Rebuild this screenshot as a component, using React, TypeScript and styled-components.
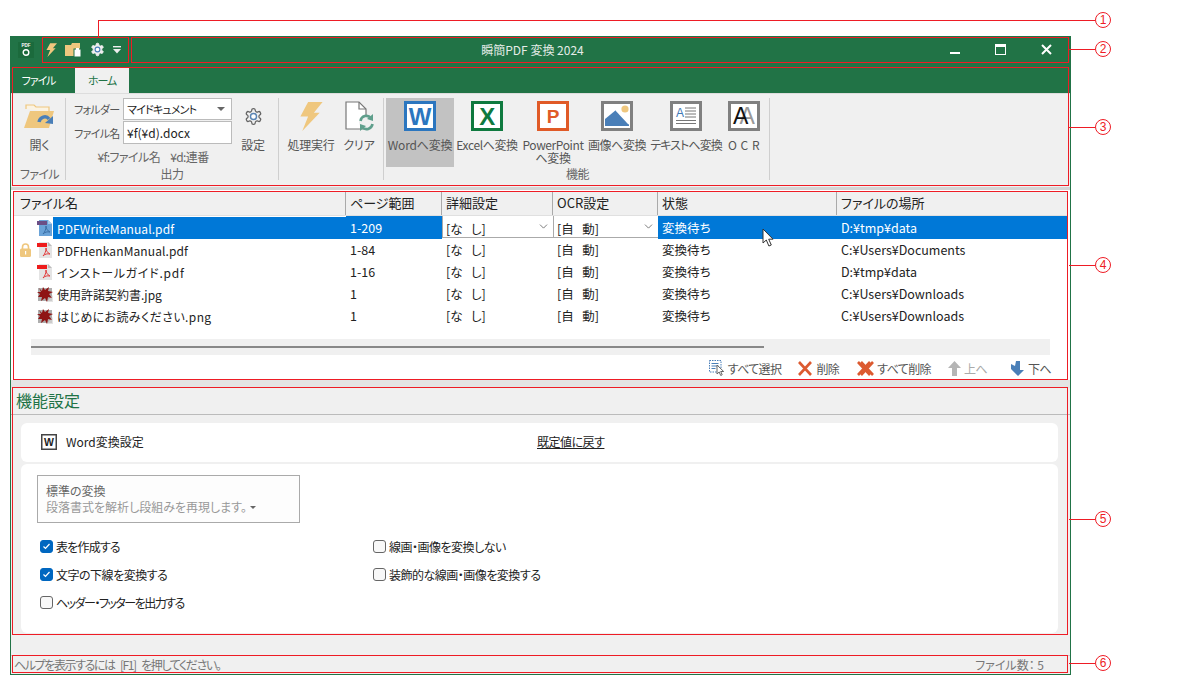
import React from 'react';
import styled, { createGlobalStyle } from 'styled-components';
import { ChevronDown } from 'lucide-react';

const GlobalStyle = createGlobalStyle`
  html, body { margin: 0; padding: 0; background: #fff; }
  body {
    font-family: "Noto Sans CJK JP", "Noto Sans", sans-serif;
    font-size: 12px;
    font-feature-settings: "palt";
    color: #222;
  }
`;

const GEAR =
  'M12.22 2h-.44a2 2 0 0 0-2 2v.18a2 2 0 0 1-1 1.73l-.43.25a2 2 0 0 1-2 0l-.15-.08a2 2 0 0 0-2.73.73l-.22.38a2 2 0 0 0 .73 2.73l.15.1a2 2 0 0 1 1 1.72v.51a2 2 0 0 1-1 1.74l-.15.09a2 2 0 0 0-.73 2.73l.22.38a2 2 0 0 0 2.73.73l.15-.08a2 2 0 0 1 2 0l.43.25a2 2 0 0 1 1 1.73V20a2 2 0 0 0 2 2h.44a2 2 0 0 0 2-2v-.18a2 2 0 0 1 1-1.73l.43-.25a2 2 0 0 1 2 0l.15.08a2 2 0 0 0 2.73-.73l.22-.39a2 2 0 0 0-.73-2.73l-.15-.08a2 2 0 0 1-1-1.74v-.5a2 2 0 0 1 1-1.74l.15-.09a2 2 0 0 0 .73-2.73l-.22-.38a2 2 0 0 0-2.73-.73l-.15.08a2 2 0 0 1-2 0l-.43-.25a2 2 0 0 1-1-1.73V4a2 2 0 0 0-2-2z';

const Bolt = ({ w, h }: { w: number; h: number }) => (
  <svg width={w} height={h} viewBox="0 0 24 30">
    <polygon points="9,0 24,0 15,11 21,11 3,30 9,15 1,15" fill="#efc77e" />
  </svg>
);

const Gear = ({ size, stroke, fill, hub }: { size: number; stroke: string; fill: string; hub: string }) => (
  <svg width={size} height={size} viewBox="0 0 24 24" fill={fill} stroke={stroke} strokeWidth="1.6">
    <path d={GEAR} />
    <circle cx="12" cy="12" r="3.8" fill="#fff" stroke={hub} strokeWidth="1.8" />
  </svg>
);

const AppLogo = () => (
  <svg width="16" height="16" viewBox="0 0 16 16">
    <rect width="16" height="16" fill="#1b6a3c" />
    <text x="8" y="5" fontSize="4.5" fontWeight="700" fill="#fff" textAnchor="middle" fontFamily="Liberation Sans">PDF</text>
    <circle cx="8" cy="10.5" r="2.8" fill="none" stroke="#fff" strokeWidth="1.4" />
  </svg>
);

const OpenFolder = () => (
  <svg width="31" height="26" viewBox="0 0 31 26">
    <path d="M2 6V2h8l2 2h13v5" fill="#fbf3e2" stroke="#efc77e" strokeWidth="1.2" />
    <polygon points="0,25 6,8 30,8 25,25" fill="#efc77e" />
    <path d="M15 19c1-5 7-7 10-3" fill="none" stroke="#4a7fb8" strokeWidth="3.4" />
    <polygon points="29,13 29,21 21,20" fill="#4a7fb8" />
  </svg>
);

const QatFolder = () => (
  <svg width="17" height="15" viewBox="0 0 17 15">
    <path d="M0 14V3h6l1-2h8v13z" fill="#efc77e" />
    <rect x="9" y="7" width="7" height="8" fill="#fff" stroke="#217346" />
    <rect x="11" y="6" width="3" height="2" fill="#fff" />
  </svg>
);

const QatMenu = () => (
  <svg width="8" height="8" viewBox="0 0 8 8">
    <rect width="8" height="1.4" fill="#eee" />
    <polygon points="0,3 8,3 4,7.5" fill="#eee" />
  </svg>
);

const ClearDoc = () => (
  <svg width="29" height="30" viewBox="0 0 29 30">
    <path d="M1 1h13l7 7v20H1z" fill="#fff" stroke="#777" strokeWidth="1.2" />
    <path d="M14 1v7h7" fill="none" stroke="#777" strokeWidth="1.2" />
    <circle cx="21.5" cy="21.5" r="7.5" fill="#f0f0f0" />
    <path d="M15.5 20a6 6 0 0 1 10.5-3" fill="none" stroke="#5f9f8c" strokeWidth="2.6" />
    <polygon points="28,13 28,20 22,18" fill="#5f9f8c" />
    <path d="M27.5 23a6 6 0 0 1-10.5 3" fill="none" stroke="#5f9f8c" strokeWidth="2.6" />
    <polygon points="15,30 15,23 21,25" fill="#5f9f8c" />
  </svg>
);

const OfficeIcon = ({ color, letter, size, base }: { color: string; letter: string; size: number; base: number }) => (
  <svg width="32" height="30" viewBox="0 0 32 30">
    <rect x="1.5" y="1.5" width="29" height="27" fill="#fff" stroke={color} strokeWidth="3" />
    <text x="16" y={base} fontSize={size} fontWeight="700" fill={color} textAnchor="middle" fontFamily="Liberation Sans">{letter}</text>
  </svg>
);

const ImageIcon = () => (
  <svg width="32" height="30" viewBox="0 0 32 30">
    <rect x="1.5" y="1.5" width="29" height="27" fill="#fff" stroke="#808080" strokeWidth="3" />
    <circle cx="24" cy="8" r="3.6" fill="#efc77e" />
    <polygon points="4,25 4,18 15,9 28,23 28,25" fill="#4a7fb8" />
    <path d="M15 9l13 14" stroke="#fff" strokeWidth="1.6" />
  </svg>
);

const TextIcon = () => (
  <svg width="32" height="30" viewBox="0 0 32 30">
    <rect x="1.5" y="1.5" width="29" height="27" fill="#fff" stroke="#808080" strokeWidth="3" />
    <text x="9.5" y="15.5" fontSize="12" fill="#3f78b5" textAnchor="middle" fontFamily="Liberation Sans">A</text>
    <path d="M15 7h11M15 10h11M15 13h11M15 16h11M6 19.5h20M6 22.5h20" stroke="#777" strokeWidth="1" />
  </svg>
);

const OcrIcon = () => (
  <svg width="32" height="30" viewBox="0 0 32 30">
    <rect x="1.5" y="1.5" width="29" height="27" fill="#fff" stroke="#808080" strokeWidth="3" />
    <text x="19.5" y="23" fontSize="23" fill="#999" textAnchor="middle" fontFamily="Liberation Sans">A</text>
    <text x="13" y="23" fontSize="23" fill="#111" textAnchor="middle" fontFamily="Liberation Sans">A</text>
  </svg>
);

const PdfIcon = ({ selected }: { selected?: boolean }) => (
  <svg width="16" height="16" viewBox="0 0 16 16">
    <path d="M2 0h9l4 4v12H2z" fill={selected ? '#6aa3d8' : '#e4e4e4'} />
    <path d="M11 0l4 4h-4z" fill={selected ? '#a9c9ea' : '#bbb'} />
    <rect y="1" width="10" height="4" fill={selected ? '#6b4f86' : '#ee1c1c'} />
    <path d="M6 14c2-2 3-5 3-8 0 3 2 5 4 6-3-.5-5 0-7 2z" fill="none" stroke={selected ? '#3a6ea5' : '#e23b3b'} strokeWidth="1" />
  </svg>
);

const SplatIcon = () => (
  <svg width="16" height="16" viewBox="0 0 16 16">
    <rect x="1" y="2" width="14" height="13" fill="#9a9a9a" opacity="0.8" />
    <path d="M0 16h16V9L9 16z" fill="#d8d8d8" opacity="0.7" />
    <polygon
      points="2,2 5,5 6,1 8,4 12,1 11,5 16,6 12,8 15,12 11,11 10,16 8,12 4,15 5,11 1,11 3,8 0,6 4,6"
      fill="#8f1414"
    />
    <circle cx="8" cy="8" r="4" fill="#8f1414" />
  </svg>
);

const LockIcon = () => (
  <svg width="11" height="14" viewBox="0 0 11 14">
    <path d="M2.5 6V4a3 3 0 0 1 6 0v2" fill="none" stroke="#efc77e" strokeWidth="1.6" />
    <rect y="5.5" width="11" height="8.5" rx="1.5" fill="#efc77e" />
    <rect x="5" y="8" width="1.2" height="3.5" fill="#fff" />
  </svg>
);

const SelectAllIcon = () => (
  <svg width="16" height="16" viewBox="0 0 16 16">
    <rect x="0.5" y="0.5" width="11.5" height="11.5" fill="none" stroke="#4a7fb8" strokeDasharray="1.5 1" />
    <path d="M2.5 3.5h7M2.5 6h7M2.5 8.5h4" stroke="#4a7fb8" />
    <path d="M8 5v9l2.2-2 1.5 3.5 1.5-.7-1.5-3.3h3z" fill="#fff" stroke="#666" />
  </svg>
);

const CrossIcon = ({ width, double }: { width: number; double?: boolean }) => (
  <svg width={width} height="15" viewBox={double ? '0 0 17 15' : '0 0 15 15'}>
    <path d="M1 1l12 13M13 1L1 14" stroke="#dc5a30" strokeWidth="2.6" fill="none" />
    {double && <path d="M4 1l12 13M16 1L4 14" stroke="#dc5a30" strokeWidth="2.6" fill="none" />}
  </svg>
);

const UpIcon = () => (
  <svg width="13" height="15" viewBox="0 0 13 15">
    <path d="M6.5 0L13 7H9v8H4V7H0z" fill="#b5b5b5" />
  </svg>
);

const DownIcon = () => (
  <svg width="15" height="15" viewBox="0 0 15 15">
    <path d="M1 3l4 2 1-5h4v9h4l-6 6-7-7z" fill="#4a7fb8" />
  </svg>
);

const WordMini = () => (
  <svg width="16" height="16" viewBox="0 0 16 16">
    <rect x="0.75" y="0.75" width="14.5" height="14.5" fill="#fff" stroke="#444" strokeWidth="1.5" />
    <text x="8" y="12" fontSize="10.5" fontWeight="700" fill="#222" textAnchor="middle" fontFamily="Liberation Sans">W</text>
  </svg>
);

const Arrow = () => (
  <svg width="12" height="19" viewBox="0 0 12 19">
    <path d="M1 1v14l3.3-3 2.6 6 2.4-1-2.6-5.8H11z" fill="#fff" stroke="#333" strokeWidth="1" />
  </svg>
);

const Page = styled.div`
  position: relative;
  width: 1200px;
  height: 700px;
  overflow: hidden;
  padding: 36px 0 0 10px;
  box-sizing: border-box;
`;

const Window = styled.div`
  width: 1061px;
  height: 639px;
  box-sizing: border-box;
  border: 1px solid #217346;
  display: flex;
  flex-direction: column;
  background: #f0f0f0;
`;

const TitleBar = styled.div`
  position: relative;
  height: 30px;
  flex: none;
  background: #217346;
  display: flex;
  align-items: center;
  padding: 0 0 5px 7px;
  box-sizing: border-box;
`;

const Qat = styled.div`
  display: flex;
  align-items: center;
  margin-left: 12px;
  gap: 8px;
`;

const TitleText = styled.div`
  position: absolute;
  left: 0;
  right: 16px;
  top: 5px;
  text-align: center;
  color: #e4ece7;
  font-size: 12px;
  line-height: 16px;
`;

const WindowControls = styled.div`
  margin-left: auto;
  display: flex;
  align-items: center;
  gap: 35px;
  padding-right: 18px;
`;

const TabStrip = styled.div`
  height: 26px;
  flex: none;
  background: #217346;
  display: flex;
  align-items: flex-end;
`;

const Tab = styled.div<{ $active?: boolean; $width: number; $ml?: number }>`
  width: ${p => p.$width}px;
  height: 25px;
  margin-left: ${p => p.$ml ?? 0}px;
  line-height: 25px;
  font-size: 11px;
  letter-spacing: -1.1px;
  text-align: center;
  background: ${p => (p.$active ? '#f0f0f0' : 'transparent')};
  color: ${p => (p.$active ? '#217346' : '#fff')};
`;

const Ribbon = styled.div`
  height: 94px;
  flex: none;
  box-sizing: border-box;
  padding-top: 4px;
  display: flex;
  align-items: flex-start;
  background: #f0f0f0;
  border-top: 1px solid #ddd;
`;

const RibbonGroup = styled.div<{ $width: number; $pad?: number }>`
  width: ${p => p.$width}px;
  height: 82px;
  box-sizing: border-box;
  border-right: 1px solid #cfcfcf;
  display: flex;
  flex-direction: column;
  padding-left: ${p => p.$pad ?? 0}px;
`;

const GroupBody = styled.div`
  height: 69px;
  display: flex;
  flex: none;
`;

const GroupLabel = styled.div`
  text-align: center;
  color: #666;
  line-height: 14px;
  letter-spacing: -0.6px;
`;

const LargeButton = styled.div<{ $width: number; $active?: boolean; $ml?: number; $track?: number }>`
  width: ${p => p.$width}px;
  height: 69px;
  flex: none;
  margin-left: ${p => p.$ml ?? 0}px;
  display: flex;
  flex-direction: column;
  align-items: center;
  background: ${p => (p.$active ? '#c2c2c2' : 'transparent')};
  color: #555;
  line-height: 13px;
  letter-spacing: ${p => p.$track ?? -0.2}px;
  text-align: center;
  white-space: nowrap;
`;

const IconSlot = styled.div`
  height: 36px;
  margin-bottom: 4px;
  flex: none;
  display: flex;
  align-items: center;
  justify-content: center;
`;

const FormColumn = styled.div`
  width: 158px;
  margin-left: 8px;
  flex: none;
  display: flex;
  flex-direction: column;
  gap: 1px;
`;

const FormRow = styled.div`
  display: flex;
  align-items: center;
`;

const FormLabel = styled.div`
  width: 49px;
  color: #555;
  font-size: 11px;
  letter-spacing: -0.7px;
  white-space: nowrap;
`;

const Field = styled.div<{ $height: number }>`
  width: 109px;
  height: ${p => p.$height}px;
  box-sizing: border-box;
  background: #fff;
  border: 1px solid #bbb;
  padding: 0 3px;
  display: flex;
  align-items: center;
  justify-content: space-between;
  color: #222;
`;

const TightText = styled.span`
  font-size: 11px;
  letter-spacing: -0.8px;
`;

const Caret = styled.span`
  width: 0;
  height: 0;
  border-left: 4px solid transparent;
  border-right: 4px solid transparent;
  border-top: 4px solid #666;
  margin-right: 3px;
`;

const Hint = styled.div`
  text-align: center;
  color: #666;
  margin-top: 4px;
  letter-spacing: -0.6px;
  word-spacing: 8px;
  line-height: 16px;
`;

const RibbonRule = styled.div`
  height: 3px;
  flex: none;
  background: #d4d4d4;
`;

const ListPanel = styled.div`
  height: 190px;
  flex: none;
  box-sizing: border-box;
  background: #fff;
  padding: 1px 2px 0 2px;
`;

const Columns = '333px 96px 111px 105px 179px 230px';

const HeaderRow = styled.div`
  display: grid;
  grid-template-columns: ${Columns};
  height: 25px;
  background: #f0f0f0;
  border-bottom: 1px solid #e0e0e0;
  box-sizing: border-box;
`;

const HeaderCell = styled.div`
  font-size: 13px;
  line-height: 24px;
  padding-left: 4px;
  border-right: 1px solid #aaa;
  color: #222;
  &:first-child { padding-left: 7px; }
  &:last-child { border-right: none; }
`;

const Row = styled.div`
  display: grid;
  grid-template-columns: ${Columns};
  height: 22px;
  line-height: 23px;
`;

const NameCell = styled.div`
  display: flex;
  align-items: center;
`;

const LockSlot = styled.div`
  width: 24px;
  padding-left: 7px;
  box-sizing: border-box;
  display: flex;
  align-items: center;
  flex: none;
`;

const FileIconSlot = styled.div`
  width: 16px;
  display: flex;
  flex: none;
`;

const FileName = styled.div<{ $selected?: boolean; $track?: number }>`
  flex: 1;
  height: 22px;
  padding-left: 4px;
  font-size: 12px;
  letter-spacing: ${p => p.$track ?? 0}px;
  white-space: nowrap;
  background: ${p => (p.$selected ? '#0078d7' : 'transparent')};
  color: ${p => (p.$selected ? '#fff' : '#222')};
`;

const Cell = styled.div<{ $selected?: boolean }>`
  padding-left: 4px;
  white-space: pre;
  font-size: 12.5px;
  background: ${p => (p.$selected ? '#0078d7' : 'transparent')};
  color: ${p => (p.$selected ? '#fff' : '#222')};
`;

const EditorCell = styled.div`
  height: 22px;
  box-sizing: border-box;
  padding: 0 3px 0 3px;
  font-size: 12.5px;
  background: #fff;
  border-left: 1px solid #aaa;
  border-bottom: 1px solid #aaa;
  overflow: hidden;
  white-space: pre;
  line-height: 25px;
  display: flex;
  justify-content: space-between;
`;

const ChevronSlot = styled.span`
  color: #555;
  display: flex;
  align-items: center;
  height: 20px;
`;

const Scrollbar = styled.div`
  margin: 13px 0 0 18px;
  width: 1019px;
  height: 16px;
  background: #f0f0f0;
  display: flex;
  align-items: center;
`;

const ScrollThumb = styled.div`
  width: 733px;
  height: 2px;
  background: #888;
`;

const ToolBar = styled.div`
  height: 18px;
  margin-top: 4px;
  display: flex;
  justify-content: flex-end;
  padding-right: 17px;
`;

const ToolItem = styled.div<{ $ml: number; $disabled?: boolean }>`
  margin-left: ${p => p.$ml}px;
  display: flex;
  align-items: center;
  gap: 3px;
  letter-spacing: -0.6px;
  color: ${p => (p.$disabled ? '#aaa' : '#555')};
  white-space: nowrap;
`;

const PanelGap = styled.div`
  height: 8px;
  flex: none;
  background: #e4e4e4;
`;

const SettingsPanel = styled.div`
  height: 267px;
  flex: none;
  box-sizing: border-box;
  background: #f0f0f0;
  display: flex;
  flex-direction: column;
  gap: 2px;
`;

const SettingsTitle = styled.div`
  height: 27px;
  flex: none;
  box-sizing: border-box;
  padding-left: 5px;
  font-size: 16px;
  line-height: 25px;
  color: #217346;
  border-bottom: 1px solid #bbb;
  margin-bottom: 6px;
`;

const Card = styled.div<{ $height: number }>`
  height: ${p => p.$height}px;
  flex: none;
  box-sizing: border-box;
  margin: 0 12px 0 10px;
  background: #fff;
  border-radius: 6px;
`;

const CardHead = styled(Card)`
  display: flex;
  align-items: center;
  padding: 0 0 2px 20px;
`;

const CardTitle = styled.div`
  margin-left: 9px;
  width: 471px;
`;

const ResetLink = styled.div`
  text-decoration: underline;
  letter-spacing: -0.5px;
  color: #222;
`;

const CardBody = styled(Card)`
  padding: 11px 16px;
`;

const ModeBox = styled.div`
  width: 263px;
  height: 48px;
  box-sizing: border-box;
  border: 1px solid #aaa;
  background: #fdfdfd;
  padding: 7px 8px;
  line-height: 16px;
`;

const ModeTitle = styled.div`
  color: #666;
`;

const ModeDesc = styled.div`
  color: #999;
  display: flex;
  align-items: center;
  gap: 3px;
`;

const SmallCaret = styled.span`
  width: 0;
  height: 0;
  border-left: 3px solid transparent;
  border-right: 3px solid transparent;
  border-top: 3px solid #666;
`;

const OptionGrid = styled.div`
  display: grid;
  grid-template-columns: 333px 333px;
  grid-auto-rows: 28px;
  margin: 9px 0 0 3px;
`;

const Option = styled.div<{ $track?: number }>`
  display: flex;
  align-items: center;
  gap: 3px;
  letter-spacing: ${p => p.$track ?? -0.5}px;
  color: #222;
`;

const Checkbox = styled.span<{ $checked?: boolean }>`
  width: 13px;
  height: 13px;
  box-sizing: border-box;
  border-radius: 3px;
  border: 1px solid ${p => (p.$checked ? '#0067c0' : '#666')};
  background: ${p => (p.$checked ? '#0067c0' : '#f8f8f8')};
  display: flex;
  align-items: center;
  justify-content: center;
`;

const StatusBar = styled.div`
  flex: 1;
  box-sizing: border-box;
  border-top: 1px solid #ccc;
  padding: 0 26px 2px 3px;
  display: flex;
  align-items: center;
  justify-content: space-between;
  color: #777;
`;

const StatusHelp = styled.span`
  letter-spacing: -1.4px;
  word-spacing: 4px;
`;

const Cursor = styled.div`
  position: absolute;
  left: 762px;
  top: 228px;
  display: flex;
`;

const RedBox = styled.div<{ $x: number; $y: number; $w: number; $h: number }>`
  position: absolute;
  left: ${p => p.$x}px;
  top: ${p => p.$y}px;
  width: ${p => p.$w}px;
  height: ${p => p.$h}px;
  box-sizing: border-box;
  border: 1px solid #ee1c25;
  pointer-events: none;
`;

const Leader = styled.div<{ $y: number; $x: number }>`
  position: absolute;
  left: ${p => p.$x}px;
  top: ${p => p.$y}px;
  width: ${p => 1095 - p.$x}px;
  height: 1px;
  background: #ee1c25;
`;

const LeaderUp = styled.div`
  position: absolute;
  left: 98px;
  top: 20px;
  width: 1px;
  height: 17px;
  background: #ee1c25;
`;

const Badge = styled.div<{ $y: number }>`
  position: absolute;
  left: 1095px;
  top: ${p => p.$y - 8}px;
  width: 16px;
  height: 16px;
  box-sizing: border-box;
  border: 1px solid #ee1c25;
  border-radius: 50%;
  color: #ee1c25;
  font-family: "Liberation Sans", sans-serif;
  font-size: 12px;
  line-height: 14px;
  text-align: center;
`;

const files = [
  { name: 'PDFWriteManual.pdf', range: '1-209', place: 'D:¥tmp¥data', kind: 'pdf', track: 0.1 },
  { name: 'PDFHenkanManual.pdf', range: '1-84', place: 'C:¥Users¥Documents', kind: 'pdf', locked: true, track: 0.1 },
  { name: 'インストールガイド.pdf', range: '1-16', place: 'D:¥tmp¥data', kind: 'pdf', track: 0.8 },
  { name: '使用許諾契約書.jpg', range: '1', place: 'C:¥Users¥Downloads', kind: 'img', track: 0 },
  { name: 'はじめにお読みください.png', range: '1', place: 'C:¥Users¥Downloads', kind: 'img', track: 0.4 },
];

const callouts = [
  { n: 1, y: 20, from: 98 },
  { n: 2, y: 49, from: 1069 },
  { n: 3, y: 127, from: 1069 },
  { n: 4, y: 265, from: 1069 },
  { n: 5, y: 519, from: 1069 },
  { n: 6, y: 663, from: 1069 },
];

const boxes = [
  { x: 42, y: 37, w: 87, h: 26 },
  { x: 131, y: 37, w: 938, h: 26 },
  { x: 12, y: 67, w: 1057, h: 119 },
  { x: 13, y: 191, w: 1055, h: 189 },
  { x: 12, y: 387, w: 1056, h: 248 },
  { x: 12, y: 655, w: 1056, h: 18 },
];

const Check = ({ on }: { on?: boolean }) => (
  <Checkbox $checked={on}>
    {on && (
      <svg width="9" height="9" viewBox="0 0 9 9">
        <path d="M1.5 4.5l2 2 4-4.5" fill="none" stroke="#fff" strokeWidth="1.2" />
      </svg>
    )}
  </Checkbox>
);

const App = () => (
  <Page>
    <GlobalStyle />
    <Window>
      <TitleBar>
        <AppLogo />
        <Qat>
          <Bolt w={11} h={16} />
          <QatFolder />
          <Gear size={15} stroke="#eee" fill="#eee" hub="#4a7fb8" />
          <QatMenu />
        </Qat>
        <TitleText>瞬簡PDF 変換 2024</TitleText>
        <WindowControls>
          <svg width="10" height="10" viewBox="0 0 10 10"><rect y="7" width="10" height="2" fill="#fff" /></svg>
          <svg width="11" height="11" viewBox="0 0 11 11">
            <rect x="0.5" y="0.5" width="10" height="10" fill="none" stroke="#fff" />
            <rect width="11" height="3" fill="#fff" />
          </svg>
          <svg width="11" height="11" viewBox="0 0 11 11">
            <path d="M1 1l9 9M10 1l-9 9" stroke="#fff" strokeWidth="2" />
          </svg>
        </WindowControls>
      </TitleBar>
      <TabStrip>
        <Tab $width={55}>ファイル</Tab>
        <Tab $width={54} $ml={9} $active>ホーム</Tab>
      </TabStrip>
      <Ribbon>
        <RibbonGroup $width={55} $pad={3}>
          <GroupBody>
            <LargeButton $width={51}>
              <IconSlot><OpenFolder /></IconSlot>
              開く
            </LargeButton>
          </GroupBody>
          <GroupLabel>ファイル</GroupLabel>
        </RibbonGroup>
        <RibbonGroup $width={213}>
          <GroupBody>
            <FormColumn>
              <FormRow>
                <FormLabel>フォルダー</FormLabel>
                <Field $height={22}><TightText>マイドキュメント</TightText><Caret /></Field>
              </FormRow>
              <FormRow>
                <FormLabel>ファイル名</FormLabel>
                <Field $height={23}>¥f(¥d).docx</Field>
              </FormRow>
              <Hint>¥f:ファイル名 ¥d:連番</Hint>
            </FormColumn>
            <LargeButton $width={34} $ml={4}>
              <IconSlot><Gear size={19} stroke="#666" fill="none" hub="#5b86b5" /></IconSlot>
              設定
            </LargeButton>
          </GroupBody>
          <GroupLabel>出力</GroupLabel>
        </RibbonGroup>
        <RibbonGroup $width={105} $pad={4}>
          <GroupBody>
            <LargeButton $width={56}>
              <IconSlot><Bolt w={24} h={29} /></IconSlot>
              処理実行
            </LargeButton>
            <LargeButton $width={40}>
              <IconSlot><ClearDoc /></IconSlot>
              クリア
            </LargeButton>
          </GroupBody>
        </RibbonGroup>
        <RibbonGroup $width={386} $pad={2}>
          <GroupBody>
            <LargeButton $width={68} $active>
              <IconSlot><OfficeIcon color="#2b76bf" letter="W" size={24} base={23.5} /></IconSlot>
              Wordへ変換
            </LargeButton>
            <LargeButton $width={66} $track={-0.4}>
              <IconSlot><OfficeIcon color="#0f7a3f" letter="X" size={24} base={23.5} /></IconSlot>
              Excelへ変換
            </LargeButton>
            <LargeButton $width={66} $track={-0.4}>
              <IconSlot><OfficeIcon color="#e05a27" letter="P" size={19} base={21.5} /></IconSlot>
              PowerPoint<br />へ変換
            </LargeButton>
            <LargeButton $width={62} $track={-0.4}>
              <IconSlot><ImageIcon /></IconSlot>
              画像へ変換
            </LargeButton>
            <LargeButton $width={76} $track={-0.9}>
              <IconSlot><TextIcon /></IconSlot>
              テキストへ変換
            </LargeButton>
            <LargeButton $width={40} $track={0.5}>
              <IconSlot><OcrIcon /></IconSlot>
              O C R
            </LargeButton>
          </GroupBody>
          <GroupLabel>機能</GroupLabel>
        </RibbonGroup>
      </Ribbon>
      <RibbonRule />
      <ListPanel>
        <HeaderRow>
          <HeaderCell>ファイル名</HeaderCell>
          <HeaderCell>ページ範囲</HeaderCell>
          <HeaderCell>詳細設定</HeaderCell>
          <HeaderCell>OCR設定</HeaderCell>
          <HeaderCell>状態</HeaderCell>
          <HeaderCell>ファイルの場所</HeaderCell>
        </HeaderRow>
        {files.map((file, index) => {
          const selected = index === 0;
          return (
            <Row key={file.name}>
              <NameCell>
                <LockSlot>{file.locked && <LockIcon />}</LockSlot>
                <FileIconSlot>{file.kind === 'pdf' ? <PdfIcon selected={selected} /> : <SplatIcon />}</FileIconSlot>
                <FileName $selected={selected} $track={file.track}>{file.name}</FileName>
              </NameCell>
              <Cell $selected={selected}>{file.range}</Cell>
              {selected ? (
                <>
                  <EditorCell>{'[な   し]'}<ChevronSlot><ChevronDown size={13} strokeWidth={1.4} /></ChevronSlot></EditorCell>
                  <EditorCell>{'[自   動]'}<ChevronSlot><ChevronDown size={13} strokeWidth={1.4} /></ChevronSlot></EditorCell>
                </>
              ) : (
                <>
                  <Cell>{'[な   し]'}</Cell>
                  <Cell>{'[自   動]'}</Cell>
                </>
              )}
              <Cell $selected={selected}>変換待ち</Cell>
              <Cell $selected={selected}>{file.place}</Cell>
            </Row>
          );
        })}
        <Scrollbar><ScrollThumb /></Scrollbar>
        <ToolBar>
          <ToolItem $ml={0}><SelectAllIcon />すべて選択</ToolItem>
          <ToolItem $ml={17}><CrossIcon width={15} />削除</ToolItem>
          <ToolItem $ml={18}><CrossIcon width={17} double />すべて削除</ToolItem>
          <ToolItem $ml={17} $disabled><UpIcon />上へ</ToolItem>
          <ToolItem $ml={23}><DownIcon />下へ</ToolItem>
        </ToolBar>
      </ListPanel>
      <PanelGap />
      <SettingsPanel>
        <SettingsTitle>機能設定</SettingsTitle>
        <CardHead $height={39}>
          <WordMini />
          <CardTitle>Word変換設定</CardTitle>
          <ResetLink>既定値に戻す</ResetLink>
        </CardHead>
        <CardBody $height={169}>
          <ModeBox>
            <ModeTitle>標準の変換</ModeTitle>
            <ModeDesc>段落書式を解析し段組みを再現します。<SmallCaret /></ModeDesc>
          </ModeBox>
          <OptionGrid>
            <Option $track={-0.8}><Check on />表を作成する</Option>
            <Option><Check />線画・画像を変換しない</Option>
            <Option><Check on />文字の下線を変換する</Option>
            <Option><Check />装飾的な線画・画像を変換する</Option>
            <Option $track={-1.5}><Check />ヘッダー・フッターを出力する</Option>
          </OptionGrid>
        </CardBody>
      </SettingsPanel>
      <StatusBar>
        <StatusHelp>ヘルプを表示するには [F1] を押してください。</StatusHelp>
        <span>ファイル数： 5</span>
      </StatusBar>
    </Window>
    <Cursor><Arrow /></Cursor>
    {boxes.map(box => (
      <RedBox key={`${box.x}-${box.y}`} $x={box.x} $y={box.y} $w={box.w} $h={box.h} />
    ))}
    <LeaderUp />
    {callouts.map(c => (
      <React.Fragment key={c.n}>
        <Leader $x={c.from} $y={c.y} />
        <Badge $y={c.y}>{c.n}</Badge>
      </React.Fragment>
    ))}
  </Page>
);

export default App;
